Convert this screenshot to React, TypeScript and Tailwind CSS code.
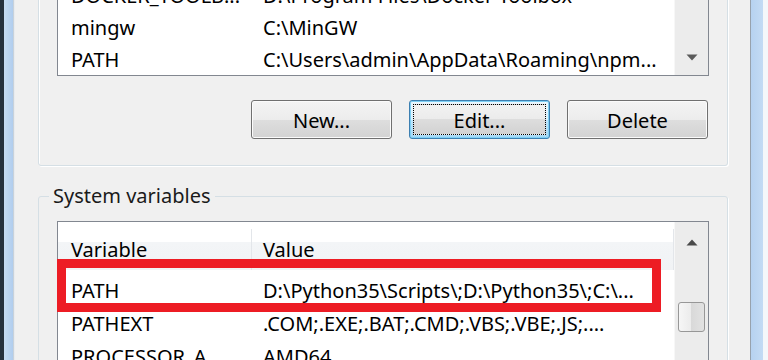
const font = "font-['Noto_Sans','Open_Sans',sans-serif]";

function Button({ label, focused }: { label: string; focused?: boolean }) {
  if (focused) {
    return (
      <div className="flex h-[39px] w-[141px] rounded-[3px] border border-[#3c7fb1] bg-[linear-gradient(to_bottom,#eaf6fd_0%,#d9f0fc_50%,#bee6fd_50%,#a7d9f5_100%)] p-[3px] shadow-[inset_0_0_0_1px_#7fd0f5]">
        <div className="flex flex-1 items-center justify-center border border-dotted border-black bg-[linear-gradient(to_bottom,#f2f2f2_0%,#ebebeb_50%,#dddddd_50%,#d2d2d2_100%)] pt-[2px] text-[20px] text-black">
          {label}
        </div>
      </div>
    );
  }
  return (
    <div className="flex h-[39px] w-[141px] items-center justify-center rounded-[3px] border border-[#707070] bg-[linear-gradient(to_bottom,#f4f4f4_0%,#ececec_50%,#dedede_50%,#d3d3d3_100%)] pt-[2px] text-[20px] text-black shadow-[inset_0_0_0_1px_#fbfbfb]">
      {label}
    </div>
  );
}

function Row({ name, value, h }: { name: string; value: string; h: string }) {
  return (
    <div className={`flex ${h} shrink-0 items-center whitespace-nowrap text-[20px] text-black`}>
      <div className="w-[194px] overflow-hidden pl-[13px]">{name}</div>
      <div className="flex-1 overflow-hidden pl-[11px]">{value}</div>
    </div>
  );
}

function DownArrow() {
  return (
    <svg width="12" height="7" viewBox="0 0 12 7">
      <path d="M0.5 0.5 H11.5 L6 6.5 Z" fill="#5a5a5a" />
    </svg>
  );
}

function UpArrow() {
  return (
    <svg width="12" height="7" viewBox="0 0 12 7">
      <path d="M0.5 6.5 H11.5 L6 0.5 Z" fill="#4a4a4a" />
    </svg>
  );
}

export default function App() {
  return (
    <div className={`flex h-[360px] w-[768px] overflow-hidden bg-white ${font}`}>
      <div className="w-[4px] bg-[#26323e]" />
      <div className="w-[9px] bg-[linear-gradient(to_right,#c6dcf3,#b0cdee)]" />
      <div className="w-[2px] bg-[linear-gradient(to_right,#b9c4cf,#f7f9fb)]" />

      <div className="flex w-[735px] flex-col bg-[#f0f0f0] pl-[23px] pr-[22px]">
        {/* User variables group */}
        <div className="mt-[-40px] shrink-0 rounded-[3px] border border-[#d5dfe5] px-[18px] pb-[26px] pt-[18px] shadow-[1px_1px_0_#fff,inset_1px_1px_0_#fff]">
          <div className="flex h-[97px] border border-[#828790] bg-white">
            <div className="flex flex-1 flex-col overflow-hidden">
              <Row h="h-[32px]" name="DOCKER_TOOLB..." value="D:\Program Files\Docker Toolbox" />
              <Row h="h-[32px]" name="mingw" value="C:\MinGW" />
              <Row h="h-[32px]" name="PATH" value="C:\Users\admin\AppData\Roaming\npm..." />
            </div>
            <div className="flex w-[34px] flex-col justify-end border-l border-[#f7f7f7] bg-[#ececec]">
              <div className="flex h-[36px] items-center justify-center">
                <DownArrow />
              </div>
            </div>
          </div>
          <div className="mt-[24px] flex justify-end gap-[17px] pr-[1px]">
            <Button label="New..." />
            <Button label="Edit..." focused />
            <Button label="Delete" />
          </div>
        </div>

        {/* System variables group */}
        <fieldset className="mt-[18px] shrink-0 rounded-[3px] border border-[#d5dfe5] px-[18px] pt-[13px] shadow-[1px_1px_0_#fff]">
          <legend className="ml-[-8px] bg-[#f0f0f0] px-[4px] text-[20px] leading-[24px] text-[#1a1a1a]">
            System variables
          </legend>
          <div className="relative flex h-[200px] border border-[#828790] bg-white">
            <div className="flex flex-1 flex-col overflow-hidden">
              <div className="flex h-[48px] shrink-0 bg-[linear-gradient(to_bottom,#ffffff_0%,#ffffff_42%,#f3f5f7_42%,#f1f3f5_100%)] pt-[7px] text-[20px] text-black">
                <div className="flex w-[194px] items-center border-r border-[#e3e6ea] pl-[13px]">
                  Variable
                </div>
                <div className="flex flex-1 items-center border-r border-[#e3e6ea] pl-[11px]">
                  Value
                </div>
              </div>
              <div className="h-[4px] shrink-0" />
              <Row h="h-[33px]" name="PATH" value="D:\Python35\Scripts\;D:\Python35\;C:\..." />
              <Row h="h-[33px]" name="PATHEXT" value=".COM;.EXE;.BAT;.CMD;.VBS;.VBE;.JS;...." />
              <Row h="h-[33px]" name="PROCESSOR_A..." value="AMD64" />
            </div>
            <div className="flex w-[34px] flex-col items-center border-l border-[#f7f7f7] bg-[#ececec]">
              <div className="flex h-[40px] w-full items-center justify-center">
                <UpArrow />
              </div>
              <div className="mt-[40px] h-[30px] w-[27px] rounded-[3px] border border-[#979797] bg-[linear-gradient(to_right,#f6f6f6,#ebebeb_50%,#d9d9d9_50%,#e2e2e2)]" />
            </div>
            {/* annotation */}
            <div className="absolute left-[-1px] top-[37px] h-[53px] w-[604px] border-[9px] border-[#ed1c24]" />
          </div>
        </fieldset>
      </div>

      <div className="w-[1px] bg-[#97a2ad]" />
      <div className="w-[12px] bg-[linear-gradient(to_right,#b6d2f0,#c3dbf4)]" />
      <div className="w-[5px] bg-[#f4f7fa]" />
    </div>
  );
}
